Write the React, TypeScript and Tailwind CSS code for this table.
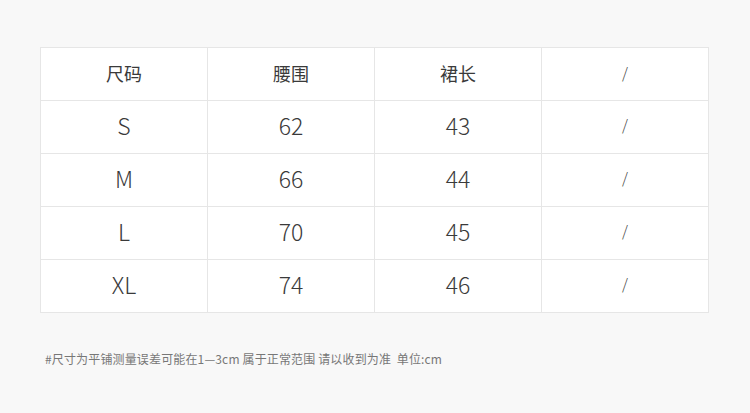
import React from "react";

const rows = [
  ["S", "62", "43", "/"],
  ["M", "66", "44", "/"],
  ["L", "70", "45", "/"],
  ["XL", "74", "46", "/"],
];

export default function App() {
  return (
    <div
      className="w-[750px] h-[413px] bg-[#f8f8f8] pt-[47px] pl-[40px]"
      style={{ fontFamily: '"Noto Sans CJK SC", "Noto Sans", sans-serif' }}
    >
      <div className="w-[669px] bg-white border border-[#e6e6e6] grid grid-cols-[167px_167px_167px_166px]">
        {["尺码", "腰围", "裙长", "/"].map((h, i) => (
          <div
            key={i}
            className={`h-[53px] flex items-center justify-center pb-[2px] text-[#3a3a3a] border-b border-[#e6e6e6] ${i < 3 ? "border-r text-[18px]" : "text-[15px] font-light"}`}
          >
            {h}
          </div>
        ))}
        {rows.map((r, ri) =>
          r.map((c, ci) => (
            <div
              key={`${ri}-${ci}`}
              className={`flex items-center justify-center pb-[4px] font-light text-[#3a3a3a] border-[#e6e6e6] ${ci < 3 ? "border-r" : ""} ${ri < 3 ? "border-b h-[53px]" : "h-[52px]"} ${c === "/" ? "text-[15px]" : "text-[23px]"}`}
            >
              {c}
            </div>
          ))
        )}
      </div>
      <div className="mt-[37px] ml-[5px] text-[12px] text-[#777] tracking-[0.15px]">
        #尺寸为平铺测量误差可能在1—3cm 属于正常范围 请以收到为准&nbsp;&nbsp;单位:cm
      </div>
    </div>
  );
}
